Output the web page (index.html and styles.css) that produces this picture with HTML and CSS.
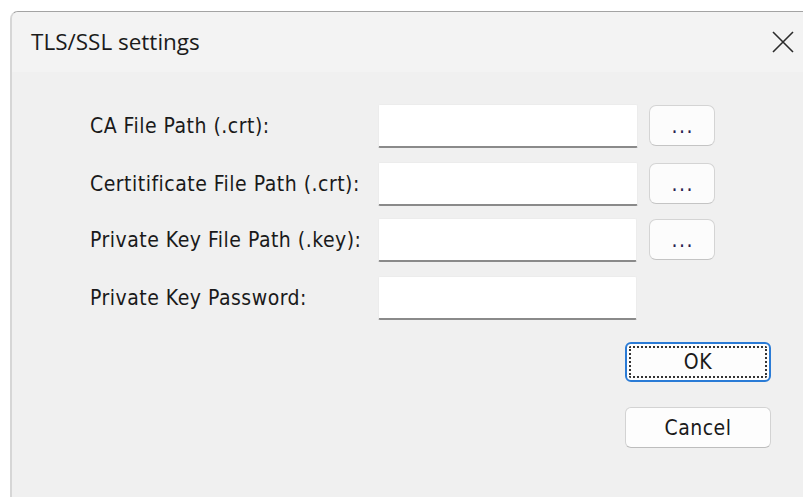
FILE: index.html
```html
<!DOCTYPE html>
<html>
<head>
<meta charset="utf-8">
<title>TLS/SSL settings</title>
<link rel="stylesheet" href="styles.css">
</head>
<body>
<div class="window">
  <div class="titlebar">
    <span class="title">TLS/SSL settings</span>
    <button class="close" aria-label="Close">
      <svg width="22" height="22" viewBox="0 0 22 22"><path d="M1 1 L21 21 M21 1 L1 21" stroke="#2b2b2b" stroke-width="1.6" fill="none"/></svg>
    </button>
  </div>
  <div class="content">
    <div class="form">
      <label class="label">CA File Path (.crt):</label>
      <input class="field" type="text">
      <button class="browse">...</button>

      <label class="label">Certitificate File Path (.crt):</label>
      <input class="field" type="text">
      <button class="browse">...</button>

      <label class="label">Private Key File Path (.key):</label>
      <input class="field narrow" type="text">
      <button class="browse">...</button>

      <label class="label">Private Key Password:</label>
      <input class="field narrow" type="password">
    </div>
    <div class="actions">
      <button class="btn default"><span class="focus">OK</span></button>
      <button class="btn cancel">Cancel</button>
    </div>
  </div>
</div>
</body>
</html>
```

FILE: styles.css
```css
html, body {
  margin: 0;
  padding: 0;
  background: #ffffff;
  overflow: hidden;
  width: 803px;
  height: 499px;
}

.window {
  margin: 11px 0 0 10px;
  width: 810px;
  height: 486px;
  box-sizing: border-box;
  border-top: 1px solid #a3a3a3;
  border-left: 2px solid #d6d6d6;
  border-top-left-radius: 8px;
  background: #f0f0f0;
  overflow: hidden;
  font-family: "DejaVu Sans Condensed", "DejaVu Sans", sans-serif;
  color: #1a1a1a;
}

.titlebar {
  height: 60px;
  background: #f3f3f3;
  display: flex;
  align-items: center;
  padding-left: 19px;
}

.title {
  font-family: "Open Sans", "Noto Sans", sans-serif;
  font-size: 22.5px;
  color: #1b1b1b;
  flex: 1;
  margin-top: -1px;
}

.close {
  width: 22px;
  height: 22px;
  padding: 0;
  margin-right: 26px;
  border: none;
  background: transparent;
  display: flex;
}

.content {
  padding: 32px 0 0 78px;
}

.form {
  display: grid;
  grid-template-columns: 288px 261px 76px;
  grid-template-rows: 58px 56px 58px 44px;
  align-items: start;
}

.label {
  height: 44px;
  display: flex;
  align-items: center;
  font-size: 21px;
  letter-spacing: 0.5px;
  color: #1a1a1a;
}

.field {
  width: 260px;
  height: 44px;
  box-sizing: border-box;
  border: 1px solid #ececec;
  border-bottom: 2px solid #8a8a8a;
  border-radius: 2px;
  background: #ffffff;
  margin: 0;
  padding: 0 6px;
  font: inherit;
}

.field.narrow {
  width: 259px;
}

.browse {
  justify-self: end;
  width: 66px;
  height: 41px;
  box-sizing: border-box;
  border: 1px solid #d4d4d4;
  border-bottom-color: #c4c4c4;
  border-radius: 7px;
  background: #fcfcfc;
  font-family: "DejaVu Sans Condensed", "DejaVu Sans", sans-serif;
  font-size: 21px;
  letter-spacing: 1.5px;
  text-indent: 1.5px;
  color: #2a2450;
  padding: 0;
  margin-top: 1px;
}

.actions {
  display: flex;
  flex-direction: column;
  align-items: flex-end;
  gap: 25px;
  width: 681px;
  margin-top: 22px;
}

.btn {
  width: 146px;
  height: 41px;
  box-sizing: border-box;
  border: 1px solid #d3d3d3;
  border-bottom-color: #bdbdbd;
  border-radius: 6px;
  background: #fdfdfd;
  font-family: "DejaVu Sans Condensed", "DejaVu Sans", sans-serif;
  font-size: 21px;
  letter-spacing: 0.5px;
  color: #1a1a1a;
  padding: 0;
}

.btn.default {
  height: 40px;
  border: 2px solid #2a7bd6;
  padding: 2px;
  display: flex;
}

.focus {
  flex: 1;
  border: 2px dotted #333333;
  border-radius: 2px;
  display: flex;
  align-items: center;
  justify-content: center;
}
```
